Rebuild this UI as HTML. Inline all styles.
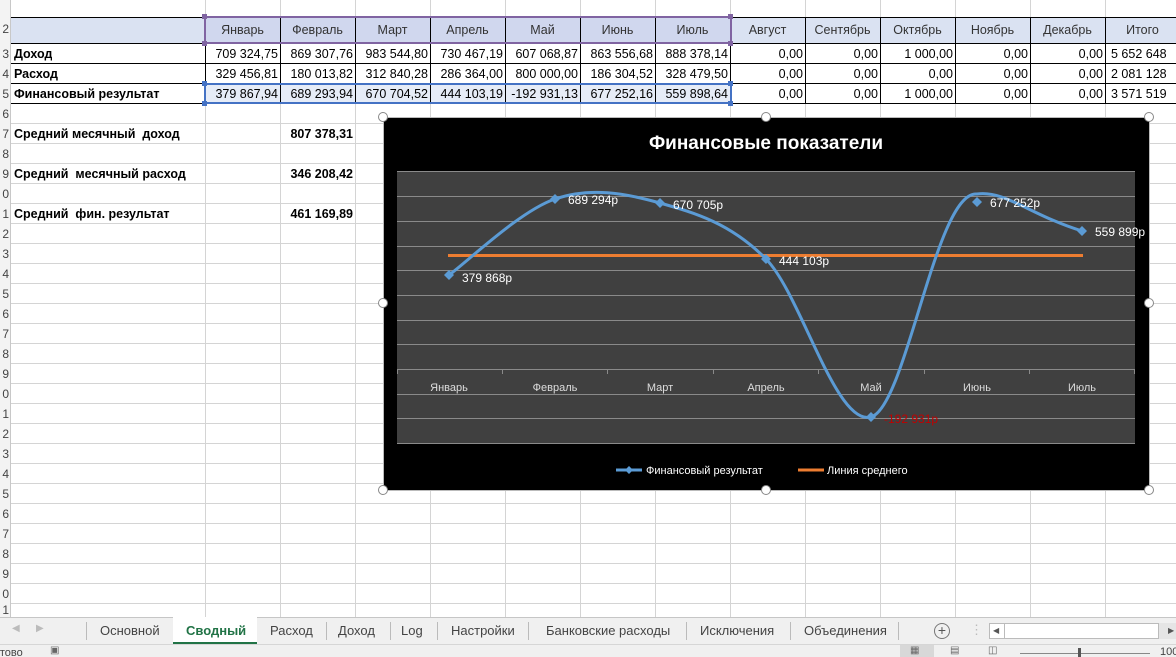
<!DOCTYPE html>
<html><head><meta charset="utf-8"><style>
*{margin:0;padding:0;box-sizing:border-box}
body{width:1176px;height:657px;overflow:hidden;background:#fff;font-family:"Liberation Sans",sans-serif;font-size:12.5px;color:#000;position:relative}
.grid{position:absolute;left:205px;top:0;width:980px;height:617px;background-image:repeating-linear-gradient(90deg,#d4d4d4 0 1px,transparent 1px 75px)}
.hgrid{position:absolute;left:11px;top:104px;width:1170px;height:513px;background-image:repeating-linear-gradient(180deg,transparent 0 19px,#d4d4d4 19px 20px)}
.rn{position:absolute;left:0;top:0;width:11px;height:617px;background:#f3f3f3;border-right:1px solid #c8c8c8;overflow:hidden}
.rn div{position:absolute;right:1px;font-size:12px;color:#444;white-space:nowrap}
.c{position:absolute;height:20px;line-height:20px;white-space:nowrap;overflow:hidden}
.r{text-align:right;padding-right:2px}
.ctr{text-align:center}
.b{font-weight:bold}
.hl{position:absolute;background:#000;height:1px}
.vl{position:absolute;background:#000;width:1px}
</style></head><body>
<div class="grid"></div>
<div class="hgrid"></div>
<div style="position:absolute;left:11px;top:17px;width:1170px;height:27px;background:#dae2f2"></div>
<div style="position:absolute;left:205px;top:17px;width:525px;height:27px;background:#d0d7ee"></div>
<div style="position:absolute;left:205px;top:84px;width:525px;height:20px;background:#e6ecf7"></div>
<div class="hl" style="left:11px;top:17px;width:1170px"></div>
<div class="hl" style="left:11px;top:43px;width:1170px"></div>
<div class="hl" style="left:11px;top:63px;width:1170px"></div>
<div class="hl" style="left:11px;top:83px;width:1170px"></div>
<div class="hl" style="left:11px;top:103px;width:1170px"></div>
<div class="vl" style="left:205px;top:17px;height:87px"></div>
<div class="vl" style="left:280px;top:17px;height:87px"></div>
<div class="vl" style="left:355px;top:17px;height:87px"></div>
<div class="vl" style="left:430px;top:17px;height:87px"></div>
<div class="vl" style="left:505px;top:17px;height:87px"></div>
<div class="vl" style="left:580px;top:17px;height:87px"></div>
<div class="vl" style="left:655px;top:17px;height:87px"></div>
<div class="vl" style="left:730px;top:17px;height:87px"></div>
<div class="vl" style="left:805px;top:17px;height:87px"></div>
<div class="vl" style="left:880px;top:17px;height:87px"></div>
<div class="vl" style="left:955px;top:17px;height:87px"></div>
<div class="vl" style="left:1030px;top:17px;height:87px"></div>
<div class="vl" style="left:1105px;top:17px;height:87px"></div>
<div style="position:absolute;left:204px;top:16px;width:528px;height:28px;border:2px solid #8064a2"></div>
<div style="position:absolute;left:202px;top:14px;width:5px;height:5px;background:#8064a2"></div>
<div style="position:absolute;left:728px;top:14px;width:5px;height:5px;background:#8064a2"></div>
<div style="position:absolute;left:202px;top:41px;width:5px;height:5px;background:#8064a2"></div>
<div style="position:absolute;left:728px;top:41px;width:5px;height:5px;background:#8064a2"></div>
<div style="position:absolute;left:204px;top:83px;width:528px;height:21px;border:2px solid #4472c4"></div>
<div style="position:absolute;left:202px;top:81px;width:5px;height:5px;background:#4472c4"></div>
<div style="position:absolute;left:728px;top:81px;width:5px;height:5px;background:#4472c4"></div>
<div style="position:absolute;left:202px;top:101px;width:5px;height:5px;background:#4472c4"></div>
<div style="position:absolute;left:728px;top:101px;width:5px;height:5px;background:#4472c4"></div>

<div class="rn">
<div style="top:22px">2</div><div style="top:47px">3</div><div style="top:67px">4</div><div style="top:87px">5</div>
<div style="top:107px">6</div><div style="top:127px">7</div><div style="top:147px">8</div><div style="top:167px">9</div>
<div style="top:187px">0</div><div style="top:207px">1</div><div style="top:227px">2</div><div style="top:247px">3</div>
<div style="top:267px">4</div><div style="top:287px">5</div><div style="top:307px">6</div><div style="top:327px">7</div>
<div style="top:347px">8</div><div style="top:367px">9</div><div style="top:387px">0</div><div style="top:407px">1</div>
<div style="top:427px">2</div><div style="top:447px">3</div><div style="top:467px">4</div><div style="top:487px">5</div>
<div style="top:507px">6</div><div style="top:527px">7</div><div style="top:547px">8</div><div style="top:567px">9</div>
<div style="top:587px">0</div><div style="top:603px">1</div>
</div>

<div class="c ctr" style="top:20px;left:205px;width:75px;color:#333">Январь</div>
<div class="c ctr" style="top:20px;left:280px;width:75px;color:#333">Февраль</div>
<div class="c ctr" style="top:20px;left:355px;width:75px;color:#333">Март</div>
<div class="c ctr" style="top:20px;left:430px;width:75px;color:#333">Апрель</div>
<div class="c ctr" style="top:20px;left:505px;width:75px;color:#333">Май</div>
<div class="c ctr" style="top:20px;left:580px;width:75px;color:#333">Июнь</div>
<div class="c ctr" style="top:20px;left:655px;width:75px;color:#333">Июль</div>
<div class="c ctr" style="top:20px;left:730px;width:75px;color:#333">Август</div>
<div class="c ctr" style="top:20px;left:805px;width:75px;color:#333">Сентябрь</div>
<div class="c ctr" style="top:20px;left:880px;width:75px;color:#333">Октябрь</div>
<div class="c ctr" style="top:20px;left:955px;width:75px;color:#333">Ноябрь</div>
<div class="c ctr" style="top:20px;left:1030px;width:75px;color:#333">Декабрь</div>
<div class="c ctr" style="top:20px;left:1105px;width:75px;color:#333">Итого</div>

<div class="c b" style="top:44px;left:14px">Доход</div>
<div class="c b" style="top:64px;left:14px">Расход</div>
<div class="c b" style="top:84px;left:14px">Финансовый результат</div>

<div class="c r" style="top:44px;left:205px;width:75px">709 324,75</div>
<div class="c r" style="top:44px;left:280px;width:75px">869 307,76</div>
<div class="c r" style="top:44px;left:355px;width:75px">983 544,80</div>
<div class="c r" style="top:44px;left:430px;width:75px">730 467,19</div>
<div class="c r" style="top:44px;left:505px;width:75px">607 068,87</div>
<div class="c r" style="top:44px;left:580px;width:75px">863 556,68</div>
<div class="c r" style="top:44px;left:655px;width:75px">888 378,14</div>
<div class="c r" style="top:44px;left:730px;width:75px">0,00</div>
<div class="c r" style="top:44px;left:805px;width:75px">0,00</div>
<div class="c r" style="top:44px;left:880px;width:75px">1 000,00</div>
<div class="c r" style="top:44px;left:955px;width:75px">0,00</div>
<div class="c r" style="top:44px;left:1030px;width:75px">0,00</div>
<div class="c" style="top:44px;left:1111px">5 652 648</div>

<div class="c r" style="top:64px;left:205px;width:75px">329 456,81</div>
<div class="c r" style="top:64px;left:280px;width:75px">180 013,82</div>
<div class="c r" style="top:64px;left:355px;width:75px">312 840,28</div>
<div class="c r" style="top:64px;left:430px;width:75px">286 364,00</div>
<div class="c r" style="top:64px;left:505px;width:75px">800 000,00</div>
<div class="c r" style="top:64px;left:580px;width:75px">186 304,52</div>
<div class="c r" style="top:64px;left:655px;width:75px">328 479,50</div>
<div class="c r" style="top:64px;left:730px;width:75px">0,00</div>
<div class="c r" style="top:64px;left:805px;width:75px">0,00</div>
<div class="c r" style="top:64px;left:880px;width:75px">0,00</div>
<div class="c r" style="top:64px;left:955px;width:75px">0,00</div>
<div class="c r" style="top:64px;left:1030px;width:75px">0,00</div>
<div class="c" style="top:64px;left:1111px">2 081 128</div>

<div class="c r" style="top:84px;left:205px;width:75px">379 867,94</div>
<div class="c r" style="top:84px;left:280px;width:75px">689 293,94</div>
<div class="c r" style="top:84px;left:355px;width:75px">670 704,52</div>
<div class="c r" style="top:84px;left:430px;width:75px">444 103,19</div>
<div class="c r" style="top:84px;left:505px;width:75px">-192 931,13</div>
<div class="c r" style="top:84px;left:580px;width:75px">677 252,16</div>
<div class="c r" style="top:84px;left:655px;width:75px">559 898,64</div>
<div class="c r" style="top:84px;left:730px;width:75px">0,00</div>
<div class="c r" style="top:84px;left:805px;width:75px">0,00</div>
<div class="c r" style="top:84px;left:880px;width:75px">1 000,00</div>
<div class="c r" style="top:84px;left:955px;width:75px">0,00</div>
<div class="c r" style="top:84px;left:1030px;width:75px">0,00</div>
<div class="c" style="top:84px;left:1111px">3 571 519</div>

<div class="c b" style="top:124px;left:14px">Средний месячный&nbsp; доход</div>
<div class="c b r" style="top:124px;left:280px;width:75px">807 378,31</div>
<div class="c b" style="top:164px;left:14px">Средний&nbsp; месячный расход</div>
<div class="c b r" style="top:164px;left:280px;width:75px">346 208,42</div>
<div class="c b" style="top:204px;left:14px">Средний&nbsp; фин. результат</div>
<div class="c b r" style="top:204px;left:280px;width:75px">461 169,89</div>

<svg style="position:absolute;left:0;top:0" width="1176" height="617" xmlns="http://www.w3.org/2000/svg" font-family="Liberation Sans, sans-serif">
<rect x="383.5" y="117.5" width="766" height="373" fill="#000" stroke="#bbb"/>
<rect x="397" y="171" width="738" height="272" fill="#404040"/>
<g stroke="#8a8a8a" stroke-width="1">
<line x1="397" x2="1135" y1="171.5" y2="171.5"/><line x1="397" x2="1135" y1="196.5" y2="196.5"/>
<line x1="397" x2="1135" y1="221.5" y2="221.5"/><line x1="397" x2="1135" y1="246.5" y2="246.5"/>
<line x1="397" x2="1135" y1="270.5" y2="270.5"/><line x1="397" x2="1135" y1="295.5" y2="295.5"/>
<line x1="397" x2="1135" y1="320.5" y2="320.5"/><line x1="397" x2="1135" y1="344.5" y2="344.5"/>
<line x1="397" x2="1135" y1="369.5" y2="369.5"/><line x1="397" x2="1135" y1="394.5" y2="394.5"/>
<line x1="397" x2="1135" y1="418.5" y2="418.5"/><line x1="397" x2="1135" y1="443.5" y2="443.5"/>
<line x1="397.5" x2="397.5" y1="369" y2="374"/><line x1="502.5" x2="502.5" y1="369" y2="374"/>
<line x1="607.5" x2="607.5" y1="369" y2="374"/><line x1="713.5" x2="713.5" y1="369" y2="374"/>
<line x1="818.5" x2="818.5" y1="369" y2="374"/><line x1="924.5" x2="924.5" y1="369" y2="374"/>
<line x1="1029.5" x2="1029.5" y1="369" y2="374"/><line x1="1134.5" x2="1134.5" y1="369" y2="374"/>
</g>
<text x="766" y="149" fill="#fff" font-size="19" font-weight="bold" text-anchor="middle">Финансовые показатели</text>
<g fill="#ddd" font-size="11" text-anchor="middle">
<text x="449" y="391">Январь</text><text x="555" y="391">Февраль</text><text x="660" y="391">Март</text>
<text x="766" y="391">Апрель</text><text x="871" y="391">Май</text><text x="977" y="391">Июнь</text><text x="1082" y="391">Июль</text>
</g>
<line x1="448" x2="1083" y1="255.5" y2="255.5" stroke="#ed7d31" stroke-width="3"/>
<path d="M449,275 C466.7,262.3 519.8,211 555,199 C590.2,187 624.8,193 660,203 C695.2,213 730.8,223.3 766,259 C801.2,294.7 835.8,426.5 871,417 C906.2,407.5 936,190 977,194 C1005,190 1030,215 1082,231" fill="none" stroke="#5b9bd5" stroke-width="3"/>
<g fill="#5b9bd5">
<path d="M449,270 l5,5 l-5,5 l-5,-5z"/><path d="M555,194 l5,5 l-5,5 l-5,-5z"/><path d="M660,198 l5,5 l-5,5 l-5,-5z"/>
<path d="M766,254 l5,5 l-5,5 l-5,-5z"/><path d="M871,412 l5,5 l-5,5 l-5,-5z"/><path d="M977,197 l5,5 l-5,5 l-5,-5z"/>
<path d="M1082,226 l5,5 l-5,5 l-5,-5z"/>
</g>
<g fill="#fff" font-size="12">
<text x="462" y="282">379 868р</text><text x="568" y="204">689 294р</text><text x="673" y="209">670 705р</text>
<text x="779" y="265">444 103р</text><text x="990" y="207">677 252р</text><text x="1095" y="236">559 899р</text>
</g>
<text x="884" y="423" fill="#c00000" font-size="12">-192 931р</text>
<line x1="616" x2="642" y1="470" y2="470" stroke="#5b9bd5" stroke-width="3"/>
<path d="M629,466 l4,4 l-4,4 l-4,-4z" fill="#5b9bd5"/>
<text x="646" y="474" fill="#fff" font-size="11">Финансовый результат</text>
<line x1="798" x2="824" y1="470" y2="470" stroke="#ed7d31" stroke-width="3"/>
<text x="827" y="474" fill="#fff" font-size="11">Линия среднего</text>
<g fill="#fff" stroke="#888">
<circle cx="383" cy="117" r="4.5"/><circle cx="766" cy="117" r="4.5"/><circle cx="1149" cy="117" r="4.5"/>
<circle cx="383" cy="303" r="4.5"/><circle cx="1149" cy="303" r="4.5"/>
<circle cx="383" cy="490" r="4.5"/><circle cx="766" cy="490" r="4.5"/><circle cx="1149" cy="490" r="4.5"/>
</g>
</svg>

<div style="position:absolute;left:0;top:617px;width:1176px;height:27px;background:#f0f0f0;border-top:1px solid #c6c6c6;font-size:13px;color:#444">
<span style="position:absolute;left:12px;top:5px;color:#bbb;font-size:10px">◀</span>
<span style="position:absolute;left:36px;top:5px;color:#bbb;font-size:10px">▶</span>
<div style="position:absolute;left:86px;top:4px;width:1px;height:18px;background:#bbb"></div>
<span style="position:absolute;left:100px;top:5px">Основной</span>
<div style="position:absolute;left:173px;top:-1px;width:84px;height:27px;background:#fff;border-bottom:2px solid #217346"></div>
<span style="position:absolute;left:186px;top:5px;color:#217346;font-weight:bold">Сводный</span>
<span style="position:absolute;left:270px;top:5px">Расход</span>
<div style="position:absolute;left:326px;top:4px;width:1px;height:18px;background:#bbb"></div>
<span style="position:absolute;left:338px;top:5px">Доход</span>
<div style="position:absolute;left:390px;top:4px;width:1px;height:18px;background:#bbb"></div>
<span style="position:absolute;left:401px;top:5px">Log</span>
<div style="position:absolute;left:437px;top:4px;width:1px;height:18px;background:#bbb"></div>
<span style="position:absolute;left:451px;top:5px">Настройки</span>
<div style="position:absolute;left:528px;top:4px;width:1px;height:18px;background:#bbb"></div>
<span style="position:absolute;left:546px;top:5px">Банковские расходы</span>
<div style="position:absolute;left:686px;top:4px;width:1px;height:18px;background:#bbb"></div>
<span style="position:absolute;left:700px;top:5px">Исключения</span>
<div style="position:absolute;left:790px;top:4px;width:1px;height:18px;background:#bbb"></div>
<span style="position:absolute;left:804px;top:5px">Объединения</span>
<div style="position:absolute;left:898px;top:4px;width:1px;height:18px;background:#bbb"></div>
<div style="position:absolute;left:934px;top:5px;width:16px;height:16px;border:1.5px solid #777;border-radius:50%;text-align:center;line-height:13px;font-size:14px;color:#555">+</div>
<span style="position:absolute;left:970px;top:4px;color:#bbb">⋮</span>
<div style="position:absolute;left:989px;top:5px;width:182px;height:16px;background:#fff;border:1px solid #bbb"></div>
<div style="position:absolute;left:1004px;top:5px;width:1px;height:16px;background:#bbb"></div>
<span style="position:absolute;left:993px;top:8px;font-size:8px;color:#555">◀</span>
<div style="position:absolute;left:1158px;top:5px;width:18px;height:16px;background:#e5e5e5;border-left:1px solid #bbb"></div>
<span style="position:absolute;left:1168px;top:8px;font-size:8px;color:#555">▶</span>
</div>
<div style="position:absolute;left:0;top:644px;width:1176px;height:13px;background:#f0f0f0;border-top:1px solid #d6d6d6;font-size:11px;color:#444;overflow:hidden">
<span style="position:absolute;left:-6px;top:2px">отово</span>
<span style="position:absolute;left:50px;top:0px;font-size:10px;color:#666">▣</span>
<div style="position:absolute;left:900px;top:0;width:34px;height:13px;background:#d8d8d8"></div>
<span style="position:absolute;left:910px;top:0;font-size:10px;color:#666">▦</span>
<span style="position:absolute;left:950px;top:0;font-size:10px;color:#666">▤</span>
<span style="position:absolute;left:988px;top:0;font-size:10px;color:#666">◫</span>
<div style="position:absolute;left:1020px;top:8px;width:130px;height:1px;background:#888"></div>
<div style="position:absolute;left:1078px;top:3px;width:3px;height:10px;background:#555"></div>
<span style="position:absolute;left:1160px;top:1px">100%</span>
</div>
</body></html>
